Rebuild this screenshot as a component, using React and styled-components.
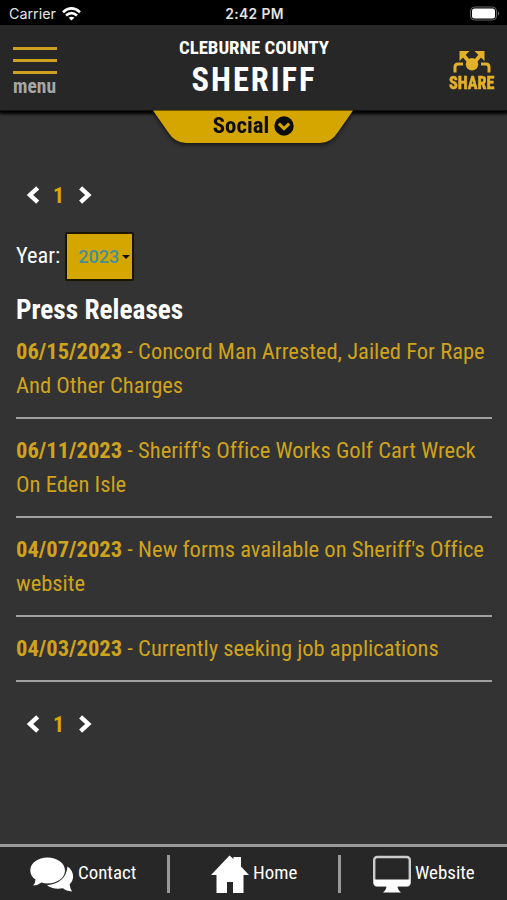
import React from 'react'
import styled, { createGlobalStyle } from 'styled-components'

const GlobalStyle = createGlobalStyle`
  *, *::before, *::after { box-sizing: border-box; }
  body {
    margin: 0;
    background: #333;
    font-family: 'Roboto Condensed', Roboto, sans-serif;
    font-stretch: 75%;
    font-variant-ligatures: none;
  }
`

const Screen = styled.div`
  width: 507px;
  height: 900px;
  display: flex;
  flex-direction: column;
  overflow: hidden;
  background: #333;
  color: #fff;
`

const StatusBar = styled.div`
  height: 25px;
  flex: none;
  display: grid;
  grid-template-columns: 1fr auto 1fr;
  align-items: center;
  padding: 2px 6px 0 9px;
  background: #000;
  color: #e4e4e4;
  font: 500 13px/16px Inter, sans-serif;
  font-stretch: 100%;
`

const Clock = styled.div`
  padding-right: 1px;
  font-size: 13.8px;
  font-weight: 600;
  letter-spacing: 0.4px;
`

const Carrier = styled.div`
  display: flex;
  align-items: center;
  gap: 6px;
  font-weight: 400;
  font-size: 14.3px;
`

const BatteryIcon = styled.svg`
  justify-self: end;
`

const Header = styled.header`
  position: relative;
  height: 86px;
  flex: none;
  display: grid;
  grid-template-columns: 1fr auto 1fr;
  padding: 0 12px 0 13px;
  background: #272727;
  border-bottom: 1px solid #111;
  box-shadow: 0 2px 3px 1px #000;
`

const MenuButton = styled.div`
  width: 45px;
  padding-top: 22px;
  color: #a6a6a6;
  font-size: 19.5px;
  font-weight: 700;
  line-height: 24px;
  white-space: nowrap;
`

const MenuBar = styled.div`
  width: 44px;
  height: 3px;
  margin-bottom: 9px;
  background: #cda11f;

  &:last-of-type { margin-bottom: 1px; }
`

const Title = styled.div`
  padding-top: 12px;
  text-align: center;
  font-weight: 700;
`

const County = styled.div`
  font-size: 18.8px;
  line-height: 23px;
`

const Office = styled.div`
  font-size: 32.5px;
  line-height: 40px;
  letter-spacing: 2px;
`

const Share = styled.div`
  justify-self: end;
  width: 46px;
  padding-top: 25px;
  color: #e3b02a;
  font-size: 19px;
  font-weight: 800;
  line-height: 17px;

  svg { display: block; margin: 0 auto; }
`

const ShareText = styled.div`
  width: 54px;
  transform: scaleX(0.85);
  transform-origin: left;
  -webkit-text-stroke: 0.5px #e3b02a;
`

const SocialTab = styled.div`
  position: absolute;
  top: 85px;
  left: 153px;
  width: 200px;
  height: 34px;
  filter: drop-shadow(0 2px 2px rgba(0, 0, 0, 0.6));
`

const TabShape = styled.svg`
  position: absolute;
  inset: 0;
`

const TabLabel = styled.div`
  position: relative;
  display: flex;
  justify-content: center;
  align-items: center;
  gap: 5px;
  height: 31px;
  padding-left: 1px;
  color: #0c0c0c;
  font-size: 22.8px;
  font-weight: 700;
`

const Content = styled.main`
  flex: 1;
  padding: 67px 15px 0 16px;
`

const Pager = styled.nav`
  display: flex;
  align-items: center;
  height: 34px;
  padding-left: 10px;
  color: #d8a900;
  font-size: 22px;
  font-weight: 700;

  span { width: 11px; margin: 0 14px 0 13px; }
`

const YearRow = styled.div`
  display: flex;
  gap: 5px;
  margin-top: 20px;
  font-size: 22.4px;
  line-height: 47px;
`

const YearSelect = styled.div`
  display: flex;
  align-items: center;
  gap: 3px;
  width: 69px;
  height: 49px;
  padding-left: 11px;
  border: 2px solid #191500;
  border-radius: 2px;
  background: #d5a600;
  color: #438f9c;
  font: 500 18px/44px Roboto, sans-serif;
  font-stretch: 100%;
`

const Caret = styled.i`
  border: 4px solid transparent;
  border-top-color: #111;
  border-bottom: 0;
`

const Heading = styled.h2`
  margin: 10px 0 6px;
  font-size: 27.3px;
  line-height: 38px;
`

const List = styled.ul`
  list-style: none;
  margin: 0;
  padding: 0;
`

const Release = styled.li`
  padding-bottom: 14px;
  margin-bottom: 15px;
  border-bottom: 2px solid #a0a0a0;
  color: #cfa31c;
  font-size: 22.55px;
  line-height: 34px;
`

const BottomPager = styled.div`
  padding-top: 10px;
`

const Footer = styled.footer`
  height: 56px;
  flex: none;
  display: grid;
  grid-template-columns: 170px 171px 1fr;
  border-top: 3px solid #999;
  background: #272727;
`

const FooterLink = styled.div`
  display: flex;
  align-items: center;
  height: 38px;
  margin-top: 8px;
  padding-left: ${p => p.$inset}px;
  gap: 4px;
  border-right: ${p => (p.$last ? 0 : 3)}px solid #999;
  font-size: 18.9px;

  span { padding-bottom: 4px; }
`

const releases = [
  ['06/15/2023', 'Concord Man Arrested, Jailed For Rape And Other Charges'],
  ['06/11/2023', "Sheriff's Office Works Golf Cart Wreck On Eden Isle"],
  ['04/07/2023', "New forms available on Sheriff's Office website"],
  ['04/03/2023', 'Currently seeking job applications']
]

const Chevron = ({ d }) => (
  <svg width='14' height='18' viewBox='0 0 14 18'>
    <path d={d} fill='none' stroke='#fff' strokeWidth='4.4' />
  </svg>
)

const Pages = () => (
  <Pager>
    <Chevron d='M11.7 1.9L4 9L11.7 16.1' />
    <span>1</span>
    <Chevron d='M2.6 1.9L10.3 9L2.6 16.1' />
  </Pager>
)

const WifiIcon = () => (
  <svg width='19' height='14' viewBox='0 0 19 14' fill='none' stroke='#fff' strokeWidth='2.6'>
    <path d='M1 5.2Q9.5 -2.4 18 5.2' />
    <path d='M4 8.6Q9.5 3.8 15 8.6' />
    <path d='M9.5 13.6L6.6 10.7Q9.5 8.6 12.4 10.7Z' fill='#fff' stroke='none' />
  </svg>
)

const ShareIcon = () => (
  <svg width='42' height='24' viewBox='-1 0 42 24' fill='#e3b02a'>
    <circle cx='20' cy='14.3' r='6.2' />
    <path d='M7.5 1H17.5L7.5 11ZM32.5 1H22.5L32.5 11Z' />
    <path d='M11 4.5L18 13M29 4.5L22 13' stroke='#e3b02a' strokeWidth='3.6' />
    <path d='M3 22.5V17Q3 14 6 14H11M37 22.5V17Q37 14 34 14H29' fill='none' stroke='#e3b02a' strokeWidth='3' />
  </svg>
)

const ContactIcon = () => (
  <svg width='44' height='35' viewBox='0 0 44 35' fill='#fff'>
    <path d='M37.5 9.5C44 14 45 22 39.8 27Q39.5 30 42 34.5Q36 34 33 31.3Q23 33 17 28.3Q36 26 37.5 9.5Z' />
    <path d='M17.5 .5C27 .5 35 6 35 13.5S27 26.5 17.5 26.5Q14 26.5 11.5 25.6Q8 28.5 3 28.5Q5.5 26 5.5 22.6Q.3 19 .3 13.5C.3 6 8 .5 17.5 .5Z' />
  </svg>
)

const HomeIcon = () => (
  <svg width='38' height='38' viewBox='0 0 38 38' fill='#fff'>
    <path d='M0 20L18.5 .5L22.5 4V2H30V11.500L38 20H32.500V38H22V27H16V38H5.500V20Z' />
  </svg>
)

const MonitorIcon = () => (
  <svg width='38' height='38' viewBox='0 0 38 38'>
    <rect x='1.2' y='2' width='35.6' height='28.5' rx='3' fill='none' stroke='#ccc' strokeWidth='2.4' />
    <path d='M1 24.5H37V28Q37 31 34 31H24.5Q24.500 34.5 28 37.5H10Q13.5 34.5 13.5 31H4Q1 31 1 28Z' fill='#fff' />
  </svg>
)

export default function App () {
  return (
    <Screen>
      <GlobalStyle />
      <StatusBar>
        <Carrier>
          Carrier
          <WifiIcon />
        </Carrier>
        <Clock>2:42 PM</Clock>
        <BatteryIcon width='32' height='16' viewBox='0 0 32 16'>
          <rect x='1.5' y='1' width='26' height='13' rx='4' fill='#000' stroke='#666' />
          <rect x='3' y='2.5' width='23' height='10' rx='2.5' fill='#fff' />
          <path d='M29 5.5Q31.5 7.5 29 9.5Z' fill='#777' />
        </BatteryIcon>
      </StatusBar>
      <Header>
        <MenuButton>
          <MenuBar />
          <MenuBar />
          <MenuBar />
          menu
        </MenuButton>
        <Title>
          <County>CLEBURNE COUNTY</County>
          <Office>SHERIFF</Office>
        </Title>
        <Share>
          <ShareIcon />
          <ShareText>SHARE</ShareText>
        </Share>
        <SocialTab>
          <TabShape width='200' height='34' viewBox='0 0 200 34'>
            <path d='M0 0.5H200L185 22Q178 33 167 33H33Q22 33 15 22Z' fill='#d5a600' />
          </TabShape>
          <TabLabel>
            Social
            <svg width='20' height='20' viewBox='0 0 20 20'>
              <circle cx='10' cy='10' r='9.7' fill='#0c0c0c' />
              <path d='M4.8 7.6L10 12.6L15.2 7.6' fill='none' stroke='#d5a600' strokeWidth='3' />
            </svg>
          </TabLabel>
        </SocialTab>
      </Header>
      <Content>
        <Pages />
        <YearRow>
          Year:
          <YearSelect>
            2023
            <Caret />
          </YearSelect>
        </YearRow>
        <Heading>Press Releases</Heading>
        <List>
          {releases.map(([date, title]) => (
            <Release key={date}>
              <b>{date}</b> - {title}
            </Release>
          ))}
        </List>
        <BottomPager>
          <Pages />
        </BottomPager>
      </Content>
      <Footer>
        <FooterLink $inset={30}>
          <ContactIcon />
          <span>Contact</span>
        </FooterLink>
        <FooterLink $inset={41}>
          <HomeIcon />
          <span>Home</span>
        </FooterLink>
        <FooterLink $inset={32} $last>
          <MonitorIcon />
          <span>Website</span>
        </FooterLink>
      </Footer>
    </Screen>
  )
}
